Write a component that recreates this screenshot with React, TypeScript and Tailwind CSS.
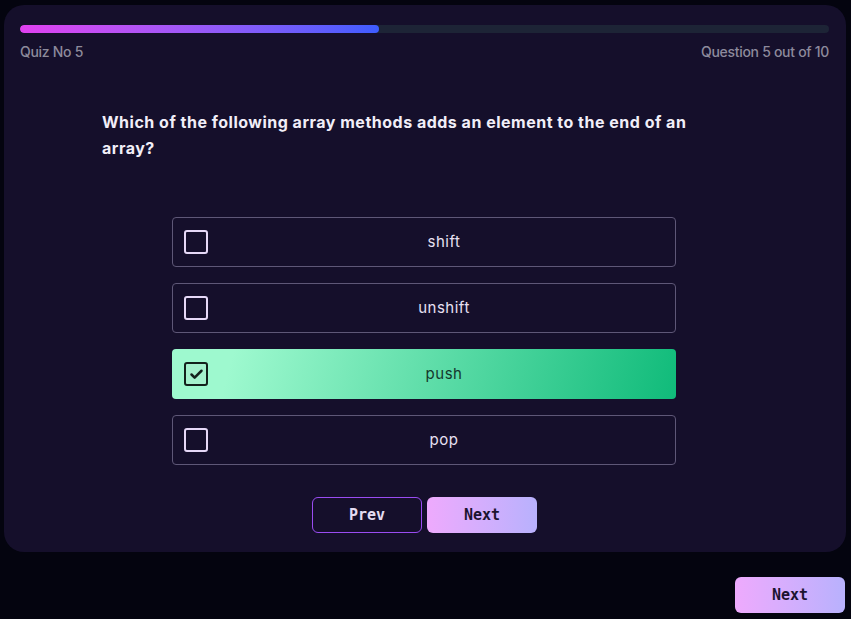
import { Check } from "lucide-react";

const options = ["shift", "unshift", "push", "pop"];
const selected = 2;

export default function App() {
  return (
    <div className="min-h-[619px] w-full bg-[#04040f] pt-[5px] px-[4px] font-['Inter',sans-serif]">
      <div className="h-[547px] w-[842px] rounded-[20px] bg-[#150f2b] px-4 pt-5 flex flex-col">
        <div className="h-[8px] w-[809px] rounded-full bg-[#1d2436] overflow-hidden">
          <div className="h-full w-[359px] rounded-full bg-gradient-to-r from-[#e040f0] to-[#3d5cff]" />
        </div>
        <div className="mt-[8px] w-[809px] flex justify-between text-[14px] font-medium tracking-[-0.3px] text-[#8d8a9c]">
          <span>Quiz No 5</span>
          <span>Question 5 out of 10</span>
        </div>

        <p className="mt-[47px] ml-[82px] w-[610px] text-[16px] leading-[26px] font-bold tracking-[0.5px] text-[#f1eef8]">
          Which of the following array methods adds an element to the end of an array?
        </p>

        <div className="mt-[56px] ml-[152px] w-[504px] flex flex-col gap-4">
          {options.map((opt, i) => {
            const on = i === selected;
            return (
              <div
                key={opt}
                className={
                  on
                    ? "relative h-[50px] rounded-[4px] bg-[linear-gradient(105deg,#9ef9cf_12%,#10bb7a_100%)] flex items-center px-3"
                    : "relative h-[50px] rounded-[4px] border border-[#5e5777] flex items-center px-[11px]"
                }
              >
                <div
                  className={
                    on
                      ? "h-[24px] w-[24px] rounded-[3px] border-2 border-[#13211c] bg-[#a4f2cd] flex items-center justify-center"
                      : "h-[24px] w-[24px] rounded-[3px] border-2 border-[#e6d8f7]"
                  }
                >
                  {on && <Check size={15} strokeWidth={4} className="text-[#13211c]" />}
                </div>
                <span
                  className={
                    on
                      ? "absolute inset-y-0 left-10 right-0 flex items-center justify-center text-[15px] tracking-[0.5px] text-[#15382c]"
                      : "absolute inset-y-0 left-10 right-0 flex items-center justify-center text-[15px] tracking-[0.5px] text-[#e8e1f3]"
                  }
                >
                  {opt}
                </span>
              </div>
            );
          })}
        </div>

        <div className="mt-[32px] ml-[292px] flex gap-[5px] font-['DejaVu_Sans_Mono',monospace]">
          <button className="h-[36px] w-[110px] rounded-[6px] border border-[#9a4cf2] text-[15px] font-bold text-[#e4dcf2]">
            Prev
          </button>
          <button className="h-[36px] w-[110px] rounded-[6px] bg-gradient-to-r from-[#eeaafd] to-[#b8b1fd] text-[15px] font-bold text-[#1c1430]">
            Next
          </button>
        </div>
      </div>

      <div className="mt-[25px] flex justify-end pr-[2px] font-['DejaVu_Sans_Mono',monospace]">
        <button className="h-[36px] w-[110px] rounded-[6px] bg-gradient-to-r from-[#eeaafd] to-[#b8b1fd] text-[15px] font-bold text-[#1c1430]">
          Next
        </button>
      </div>
    </div>
  );
}
